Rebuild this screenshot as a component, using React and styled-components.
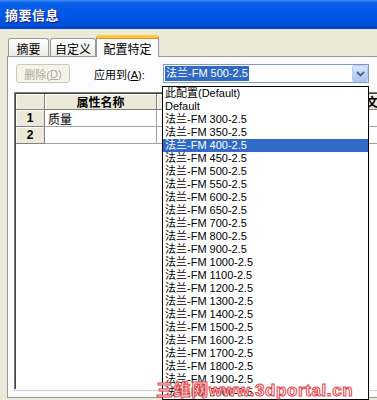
import React from 'react';
import styled, { createGlobalStyle } from 'styled-components';

const GlobalStyle = createGlobalStyle`
    html, body {
        margin: 0;
        padding: 0;
        background: #ece9d8;
    }
    body {
        font-family: "Liberation Sans", "Noto Sans CJK SC", sans-serif;
        font-size: 11px;
        color: #000;
    }
`;

const Window = styled.div`
    position: relative;
    width: 377px;
    height: 400px;
    overflow: hidden;
    background: #ece9d8;
`;

const TitleBar = styled.div`
    height: 29px;
    display: flex;
    align-items: center;
    padding-left: 5px;
    background: linear-gradient(#3d8cf6 0, #0a5fe8 3px, #0058e6 45%, #0052de 80%, #0044c8 100%);
    color: #fff;
    font-size: 13px;
    font-weight: bold;
    text-shadow: 1px 1px #0a1883;
    letter-spacing: 0.5px;
`;

const TabStrip = styled.div`
    display: flex;
    align-items: flex-end;
    height: 21px;
    margin: 6px 0 0 8px;
    position: relative;
    z-index: 2;
`;

const Tab = styled.div`
    box-sizing: border-box;
    width: ${(p) => p.$w}px;
    height: ${(p) => (p.$active ? 22 : 18)}px;
    margin-left: ${(p) => p.$gap || 0}px;
    margin-bottom: ${(p) => (p.$active ? -1 : 0)}px;
    display: flex;
    align-items: center;
    justify-content: center;
    border: 1px solid #919b9c;
    border-bottom: none;
    border-radius: 3px 3px 0 0;
    font-size: 12px;
    padding-top: ${(p) => (p.$active ? 2 : 1)}px;
    background: ${(p) => (p.$active ? '#fcfcfe' : 'linear-gradient(#ffffff, #f3f2ec 70%, #e9e8e2)')};
    border-top: ${(p) => (p.$active ? '3px solid #ffc83c' : '1px solid #919b9c')};
    box-shadow: ${(p) => (p.$active ? 'inset 0 1px 0 #e68b2c' : 'none')};
`;

const Panel = styled.div`
    box-sizing: border-box;
    height: 342px;
    margin-left: 7px;
    width: 380px;
    border: 1px solid #919b9c;
    background: #fcfcfe;
    padding: 7px 0 0 6px;
`;

const Toolbar = styled.div`
    display: flex;
    align-items: center;
    height: 19px;
    padding-left: 2px;
`;

const Button = styled.div`
    box-sizing: border-box;
    width: 54px;
    height: 19px;
    border: 1px solid #c9c7ba;
    border-radius: 3px;
    background: #f5f4ea;
    color: #aca899;
    display: flex;
    align-items: center;
    justify-content: center;
    font-size: 11px;
`;

const Label = styled.div`
    width: 69px;
    margin-left: 24px;
    font-size: 11px;
`;

const Combo = styled.div`
    position: relative;
    box-sizing: border-box;
    width: 206px;
    height: 19px;
    border: 1px solid #7f9db9;
    background: #fff;
    display: flex;
    align-items: center;
    padding-left: 1px;
`;

const Selected = styled.span`
    background: #316ac5;
    color: #fff;
    line-height: 15px;
    padding: 0 1px;
`;

const DropButton = styled.div`
    position: absolute;
    right: 0;
    top: 0;
    box-sizing: border-box;
    width: 16px;
    height: 17px;
    border: 1px solid #b9cbf3;
    border-radius: 2px;
    background: linear-gradient(#d6e3fe, #bcd0f8 60%, #aec4f4);
    display: flex;
    align-items: center;
    justify-content: center;
`;

const DropList = styled.div`
    position: absolute;
    top: 21px;
    left: -2px;
    width: 207px;
    box-sizing: border-box;
    border: 1px solid #000;
    background: #fff;
    z-index: 5;
`;

const ListItem = styled.div`
    height: 13px;
    line-height: 13px;
    padding-left: 2px;
    white-space: nowrap;
    background: ${(p) => (p.$hot ? '#316ac5' : 'transparent')};
    color: ${(p) => (p.$hot ? '#fff' : '#000')};
`;

const Grid = styled.div`
    box-sizing: border-box;
    margin-top: 9px;
    width: 420px;
    height: 298px;
    border-top: 1px solid #808080;
    border-left: 1px solid #808080;
    border-bottom: 1px solid #fff;
    box-shadow: inset 1px 1px 0 #404040, 0 1px 0 #d4d0c8;
    background: #fff;
    padding: 1px 0 0 1px;
`;

const GridRow = styled.div`
    display: flex;
    height: ${(p) => (p.$head ? 16 : 17)}px;
`;

const Cell = styled.div`
    box-sizing: border-box;
    flex: 0 0 ${(p) => p.$w}px;
    border-right: 1px solid ${(p) => (p.$head ? '#808080' : '#a0a0a0')};
    border-bottom: 1px solid ${(p) => (p.$head ? '#808080' : '#a0a0a0')};
    background: ${(p) => (p.$head ? '#ece9d8' : '#fff')};
    box-shadow: ${(p) => (p.$head ? 'inset 1px 1px 0 #fff' : 'none')};
    font-weight: ${(p) => (p.$head ? 'bold' : 'normal')};
    font-size: 12px;
    display: flex;
    align-items: center;
    justify-content: ${(p) => (p.$left ? 'flex-start' : 'center')};
    padding-left: ${(p) => (p.$left ? 3 : 0)}px;
    overflow: hidden;
    white-space: nowrap;
`;

const Watermark = styled.div`
    position: absolute;
    left: 156px;
    top: 376px;
    z-index: 10;
    font-family: "Liberation Sans", "Noto Sans CJK SC", sans-serif;
    font-weight: bold;
    font-size: 17px;
    letter-spacing: 0.6px;
    color: #fff4f4;
    -webkit-text-stroke: 1px #e2474c;
    white-space: nowrap;
`;

const Chevron = () => (
    <svg width="9" height="6" viewBox="0 0 9 6">
        <path d="M1 1 L4.5 4.5 L8 1" fill="none" stroke="#4d6185" strokeWidth="1.8" />
    </svg>
);

const items = [
    '此配置(Default)',
    'Default',
    '300', '350', '400', '450', '500', '550', '600', '650', '700', '800', '900',
    '1000', '1100', '1200', '1300', '1400', '1500', '1600', '1700', '1800', '1900', '2000',
];

const label = (s) => (/^\d+$/.test(s) ? `法兰-FM ${s}-2.5` : s);

const App = () => (
    <>
        <GlobalStyle />
        <Window>
            <TitleBar>摘要信息</TitleBar>
            <TabStrip>
                <Tab $w={41}>摘要</Tab>
                <Tab $w={46} $gap={1}>自定义</Tab>
                <Tab $w={63} $active>配置特定</Tab>
            </TabStrip>
            <Panel>
                <Toolbar>
                    <Button>删除(<u>D</u>)</Button>
                    <Label>应用到(<u>A</u>):</Label>
                    <Combo>
                        <Selected>法兰-FM 500-2.5</Selected>
                        <DropButton>
                            <Chevron />
                        </DropButton>
                        <DropList>
                            {items.map((s) => (
                                <ListItem key={s} $hot={s === '400'}>{label(s)}</ListItem>
                            ))}
                        </DropList>
                    </Combo>
                </Toolbar>
                <Grid>
                    <GridRow $head>
                        <Cell $head $w={29} />
                        <Cell $head $w={112}>属性名称</Cell>
                        <Cell $head $w={206}>类型</Cell>
                        <Cell $head $w={90} $left>文字表达</Cell>
                    </GridRow>
                    <GridRow>
                        <Cell $head $w={29}>1</Cell>
                        <Cell $w={112} $left>质量</Cell>
                        <Cell $w={206} />
                        <Cell $w={90} />
                    </GridRow>
                    <GridRow>
                        <Cell $head $w={29}>2</Cell>
                        <Cell $w={112} />
                        <Cell $w={206} />
                        <Cell $w={90} />
                    </GridRow>
                </Grid>
            </Panel>
            <Watermark>三维网www.3dportal.cn</Watermark>
        </Window>
    </>
);

export default App;
